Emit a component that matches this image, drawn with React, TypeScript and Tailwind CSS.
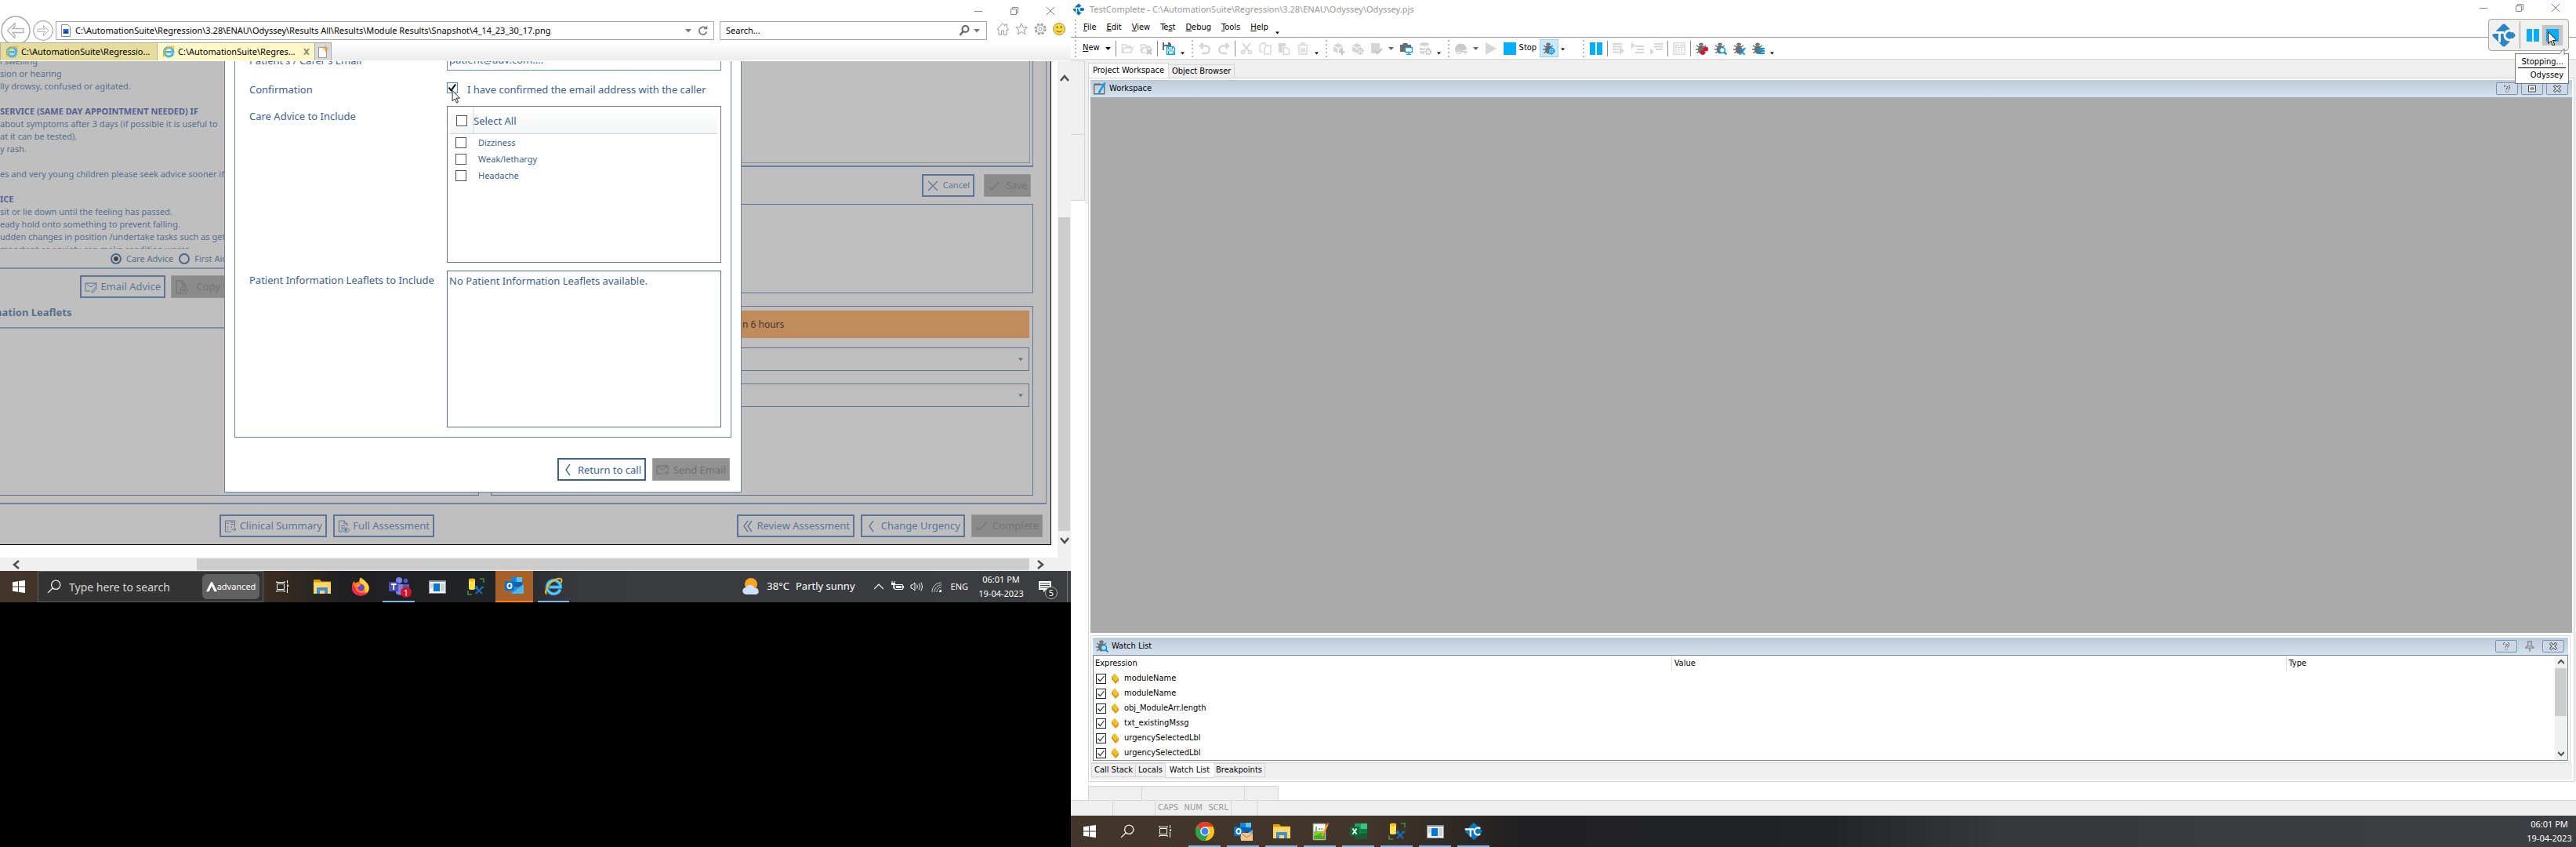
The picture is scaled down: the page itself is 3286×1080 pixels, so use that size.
import type { ReactNode } from "react";

const NOTO = "font-['Noto_Sans',sans-serif]";
const TAHOMA = "font-['DejaVu_Sans_Condensed','DejaVu_Sans',sans-serif]";

type SvgProps = { children: ReactNode; className?: string; box?: string };
const Svg = ({ children, className = "size-4", box = "0 0 16 16" }: SvgProps) => (
  <svg viewBox={box} className={`${className} shrink-0`} fill="none" aria-hidden="true">
    {children}
  </svg>
);

/* ---------- shared icons ---------- */

const IELogo = ({ className = "size-4" }: { className?: string }) => (
  <Svg className={className} box="0 0 24 24">
    <path d="M20.5 15.5A8.6 8.6 0 1 1 21 12.6H6.5" stroke="#2b9fe0" strokeWidth="4.2" />
    <path d="M20.5 15.5A8.6 8.6 0 1 1 21 12.6H6.5" stroke="#74d0f7" strokeWidth="1.6" />
    <path d="M3.5 21.5C0 20.5 3 12 9 6.500S22 .5 22.500 3.500c.2 1.200-.3 2.500-1 4" stroke="#f2b61b" strokeWidth="2" />
  </Svg>
);

const MinIcon = () => <Svg className="size-3" box="0 0 12 12"><path d="M1 6.500h10" stroke="#8a8a8a" /></Svg>;
const RestoreIcon = () => (
  <Svg className="size-3" box="0 0 12 12">
    <path d="M1.500 3.500h7v7h-7zM3.500 3.500v-2h7v7h-2" stroke="#8a8a8a" />
  </Svg>
);
const CloseIcon = () => <Svg className="size-3" box="0 0 12 12"><path d="M1 1l10 10M11 1L1 11" stroke="#8a8a8a" /></Svg>;

const WindowControls = ({ className }: { className: string }) => (
  <div className={className}>
    <button aria-label="Minimize"><MinIcon /></button>
    <button aria-label="Restore"><RestoreIcon /></button>
    <button aria-label="Close"><CloseIcon /></button>
  </div>
);

const TCLogo = ({ className, color = "#0a76bd" }: { className: string; color?: string }) => (
  <Svg className={className} box="0 0 32 32">
    <rect x="5" y="5" width="22" height="22" rx="3" transform="rotate(45 16 16)" fill={color} />
    <path d="M1 12.500h15M10.500 13v12" stroke="#fff" strokeWidth="3" />
    <path d="M27 11.500a6 6 0 1 0 0 9" stroke="#fff" strokeWidth="3" />
  </Svg>
);

const CursorIcon = ({ className }: { className: string }) => (
  <svg viewBox="0 0 12 19" className={className} aria-hidden="true">
    <path d="M.5.5v15l3.500-3.300 2.500 5.800 2.300-1-2.500-5.600H11z" fill="#fff" stroke="#111" />
  </svg>
);

/* ---------- taskbar icons ---------- */

const StartIcon = () => (
  <Svg><path d="M0 2.200 7 1.200V7.600H0zM8 1.100 16 0v7.600H8zM0 8.400h7v6.400l-7-1zM8 8.400h8V16l-8-1.100z" fill="#fff" /></Svg>
);
const MagnifierIcon = ({ className = "size-[18px]" }: { className?: string }) => (
  <Svg className={className}><circle cx="10" cy="6" r="5" stroke="#eee" strokeWidth="1.200" /><path d="M6.500 9.500 1 15" stroke="#eee" strokeWidth="1.200" /></Svg>
);
const TaskViewIcon = () => (
  <Svg>
    <path d="M1.500 4.500h9v7h-9zM.5 2.500h11M.5 13.500h11M1 1v1.500M11 1v1.500M1 13.500V15M11 13.500V15M14.500 0v4M14.500 9v7" stroke="#fff" />
    <path d="M14 5.500h2v2.500h-2z" fill="#fff" />
  </Svg>
);
const FolderIcon = () => (
  <Svg className="h-5 w-[22px]" box="0 0 22 20">
    <path d="M0 1h8l2 2.500h12V19H0z" fill="#e0a100" />
    <path d="M0 4.500h22V19H0z" fill="#ffd766" />
    <path d="M4 11h14v8h-4v-4H8v4H4z" fill="#3f8fd6" />
  </Svg>
);
const FirefoxIcon = () => (
  <Svg className="size-6" box="0 0 24 24">
    <path d="M12 .5c2 2 3 3.500 3.500 5C20 7 23 10 23 14c0 5-4.500 9.500-11 9.500S1 19 1 13.500C1 9 2.500 7.500 3 5l2.500 2.500C7 6.500 8 6 9.500 6 10 4 11 2 12 .5z" fill="#ff7a18" />
    <path d="M12 .5c5 3.500 10.500 7 10.500 13.500 0 4-3 7-6 8C19 15 17 9 11.500 8 10.500 5 11 2 12 .5z" fill="#ffcf33" />
    <path d="M1 13.500C1 19 5.500 23.500 12 23.500c4 0 7-2 8.500-4.500-7 3-14 1-15.500-6-1-1-2-3-2-5-1.200 1.500-2 3.500-2 5.500z" fill="#f0245c" />
    <circle cx="12.500" cy="13" r="4.300" fill="#6f40d8" />
    <path d="M6 9.500c2.500-1.500 5-.5 6.500 1-2 0-3 1.500-4.500 2.500z" fill="#ff9a1f" />
  </Svg>
);
const TeamsIcon = () => (
  <Svg className="size-7" box="0 0 28 28">
    <circle cx="14" cy="6" r="4" fill="#7b83eb" />
    <circle cx="22.500" cy="6.500" r="2.800" fill="#5059c9" />
    <path d="M10 11h11v8a6 6 0 0 1-11 3z" fill="#7b83eb" />
    <path d="M19 11h8v6a4 4 0 0 1-8 3z" fill="#5059c9" />
    <rect x="1" y="8" width="12" height="12" fill="#464eb8" />
    <path d="M4 11h6.500M7.200 11v7" stroke="#fff" strokeWidth="1.800" />
  </Svg>
);
const AppWindowIcon = () => (
  <Svg className="h-[17px] w-[22px]" box="0 0 22 17">
    <path d="M0 0h22v17H0z" fill="#8d9499" /><path d="M1 2h20v14H1z" fill="#f2f2f2" />
    <path d="M6 4h8v10H6z" fill="#0078d7" />
    <path d="M2 5h3M2 7h3M2 9h3M15 5h5M15 7h5M15 9h5M15 11h5M15 13h5" stroke="#9aa0a5" strokeWidth=".8" />
  </Svg>
);
const ToolIcon = () => (
  <Svg className="h-[22px] w-[22px]" box="0 0 22 22">
    <path d="M2 2.500v11c0 2 8 2 8 0v-11z" fill="#fce14b" /><ellipse cx="6" cy="2.500" rx="4.200" ry="2" fill="#f3c22b" />
    <path d="M16 1h5v5M1 16v5h5" stroke="#36923a" strokeWidth="1.600" />
    <path d="M11 12l8 8M19 12l-8 8" stroke="#0d76c4" strokeWidth="1.800" />
    <path d="M10 11.500l2.500-1 1 2-2 1.500zM18 10.500l2 2 1.500-1" stroke="#0d76c4" strokeWidth="1.200" fill="#0d76c4" />
  </Svg>
);
const OutlookIcon = ({ letter = false }: { letter?: boolean }) => (
  <Svg className="size-6" box="0 0 24 24">
    <path d="M8 1h14v12H8z" fill="#0a62ad" /><path d="M15 1h7v6h-7z" fill="#50c8f5" /><path d="M8 1h7v6H8z" fill="#1683d6" />
    <path d="M8 10l8 5 8-5v12H8z" fill="#1a94e6" /><path d="M8 22l16-12v12z" fill="#4db8f0" />
    <rect y="6" width="12" height="12" fill="#0d72c7" /><ellipse cx="6" cy="12" rx="2.600" ry="3.200" stroke="#fff" strokeWidth="1.800" />
    {letter && <><path d="M9 14h15v10H9z" fill="#f6c58e" /><path d="M9 14l7.500 6 7.500-6" stroke="#a8753c" /></>}
  </Svg>
);
const ChromeIcon = () => (
  <Svg className="size-6" box="0 0 24 24">
    <circle cx="12" cy="12" r="12" fill="#fbc116" />
    <path d="M12 12 1.600 6A12 12 0 0 1 22.400 6H12z" fill="#e33b2e" />
    <path d="M12 12 1.600 6A12 12 0 0 0 12 24l5.200-9z" fill="#2da24c" />
    <circle cx="12" cy="12" r="5.800" fill="#fff" /><circle cx="12" cy="12" r="4.500" fill="#3f82f0" />
  </Svg>
);
const NotepadIcon = () => (
  <Svg className="size-6" box="0 0 24 24">
    <path d="M3 2h16v21H3z" fill="#f5f8ee" stroke="#777" /><path d="M4 12h14v10H4z" fill="#7fd02f" /><path d="M4 18l14-5v9H4z" fill="#4fae1c" />
    <path d="M4 1.500h14" stroke="#555" strokeDasharray="1.500 1" strokeWidth="1.500" /><path d="M7 6v6M10 9h2M13 9h2" stroke="#444" />
    <path d="M22 2l-6 13-1.500 3" stroke="#f0a32c" strokeWidth="2.400" /><path d="M22.500 1l-1 2.500" stroke="#d8402c" strokeWidth="2.600" />
  </Svg>
);
const ExcelIcon = () => (
  <Svg className="size-6" box="0 0 24 24">
    <path d="M7 2h16v20H7z" fill="#1c8048" /><path d="M15 2h8v7h-8z" fill="#35c481" /><path d="M7 2h8v7H7z" fill="#21a366" /><path d="M15 9h8v6h-8z" fill="#107c41" /><path d="M7 15h16v7H7z" fill="#185c37" />
    <rect x="1" y="6" width="12" height="12" fill="#0e6b38" /><path d="M4.500 8.500l5 7M9.500 8.500l-5 7" stroke="#fff" strokeWidth="1.800" />
  </Svg>
);
const WeatherIcon = () => (
  <Svg className="size-6" box="0 0 24 24">
    <circle cx="12" cy="9" r="8" fill="#fba41f" />
    <path d="M6 22a4.500 4.500 0 0 1-.5-9A6 6 0 0 1 16.500 14 4.200 4.200 0 0 1 19 22z" fill="#cfe0fb" />
  </Svg>
);

/* ---------- browser window ---------- */

const ADDRESS =
  "C:\\AutomationSuite\\Regression\\3.28\\ENAU\\Odyssey\\Results All\\Results\\Module Results\\Snapshot\\4_14_23_30_17.png";

const BrowserChrome = () => (
  <header className="bg-white">
    <WindowControls className="flex h-[27px] items-center justify-end gap-[34px] pr-5" />
    <div className="flex h-[27px] items-start pr-[7px] pl-px">
      <button aria-label="Back" className="-mt-[7px]">
        <Svg className="size-[38px]" box="0 0 38 38">
          <circle cx="19" cy="19" r="18" stroke="#a9a9a9" strokeWidth="1.500" />
          <path d="M18 9.500 8.500 19 18 28.500v-4L15 21.500h14v-5H15l3-3z" stroke="#b2b2b2" strokeWidth="1.300" />
        </Svg>
      </button>
      <button aria-label="Forward" className="-mt-px ml-[3px]">
        <Svg className="size-[26px]" box="0 0 26 26">
          <circle cx="13" cy="13" r="12.300" stroke="#a9a9a9" strokeWidth="1.200" />
          <path d="M13.500 6.500 20 13l-6.500 6.500v-3l2-2H6v-3.500h9.500l-2-2z" stroke="#b2b2b2" />
        </Svg>
      </button>
      <div className="ml-[3px] flex h-6 w-[840px] items-center border border-[#a9a9a9] pr-1.5 pl-1">
        <Svg className="h-4 w-4">
          <path d="M2.500.5h8l3 3v12h-11z" fill="#fff" stroke="#8c8c8c" /><path d="M4.500 6h7v6h-7z" fill="#1e6fd0" /><path d="M5 11l3-3 3 3z" fill="#123a7a" />
        </Svg>
        <input aria-label="Address" defaultValue={ADDRESS} className="ml-1 min-w-0 flex-1 bg-transparent text-[11px] text-black outline-none" />
        <Svg className="size-2" box="0 0 8 8"><path d="M0 2h8L4 6.500z" fill="#777" /></Svg>
        <button aria-label="Refresh" className="ml-2">
          <Svg className="size-3.5"><path d="M13 9.500A5.500 5.500 0 1 1 11 4" stroke="#777" strokeWidth="2" /><path d="M8.500 6H14V.5z" fill="#777" /></Svg>
        </button>
      </div>
      <div className="ml-[7px] flex h-6 flex-1 items-center border border-[#a9a9a9] pr-2 pl-[7px]">
        <input aria-label="Search" placeholder="Search..." className="min-w-0 flex-1 text-[11px] outline-none placeholder:text-black" />
        <Svg><circle cx="9.500" cy="6" r="4" stroke="#666" strokeWidth="2" /><path d="M6.500 9 2.500 14" stroke="#666" strokeWidth="2.500" /></Svg>
        <Svg className="ml-1 size-2" box="0 0 8 8"><path d="M0 2h8L4 6.500z" fill="#777" /></Svg>
      </div>
      <div className="ml-3 flex gap-2 pt-0.5">
        <button aria-label="Home"><Svg><path d="M1 8.500 8 1l3 3V2h2.500v4.500L15.500 9H13v6.500H9.500V10h-3v5.500H3V9z" stroke="#9b9b9b" /></Svg></button>
        <button aria-label="Favorites"><Svg><path d="M8 .8l2.100 5h5.200l-4.100 3.400 1.500 5.600L8 11.500l-4.700 3.300 1.500-5.600L.7 5.800h5.200z" stroke="#9b9b9b" /></Svg></button>
        <button aria-label="Tools"><Svg><circle cx="8" cy="8" r="6.500" stroke="#9b9b9b" strokeWidth="2" strokeDasharray="3 2.100" /><circle cx="8" cy="8" r="5" fill="#fff" stroke="#9b9b9b" /><circle cx="8" cy="8" r="2" stroke="#9b9b9b" /></Svg></button>
        <button aria-label="Feedback"><Svg><circle cx="8" cy="8" r="7.500" fill="#fbd83b" stroke="#a89a5a" /><path d="M5.500 4.500v2.500M10.500 4.500v2.500" stroke="#6b5a10" strokeWidth="1.500" /><path d="M4.500 10c1.500 2.500 5.500 2.500 7 0" stroke="#6b5a10" /></Svg></button>
      </div>
    </div>
    <nav className="relative mb-px flex h-[23px] bg-linear-to-b from-white to-[#ececec] text-[11px] text-black">
      <button className="flex w-[200px] items-center gap-1 overflow-hidden border-t border-l border-[#b0b0b0] bg-[#e5dc9c] pl-1.5 whitespace-nowrap">
        <IELogo /><span>C:\AutomationSuite\Regressio...</span>
      </button>
      <div className="flex w-[201px] items-center gap-1 border-t border-l border-[#b0b0b0] bg-[#fff8c6] pr-1.5 pl-1.5 whitespace-nowrap">
        <IELogo /><span className="flex-1">C:\AutomationSuite\Regres...</span>
        <button aria-label="Close tab"><Svg className="size-2" box="0 0 8 8"><path d="M1 0l6 8M7 0 1 8" stroke="#8d8a70" strokeWidth="2" /></Svg></button>
      </div>
      <button aria-label="New tab" className="flex w-[22px] items-center justify-center border border-b-0 border-[#a9a9a9] bg-[#d9d9d9]">
        <Svg><path d="M2.500 2.500h10v13h-10z" fill="#fff" stroke="#999" /><path d="M11.500 0v8M7.500 4h8M9 1.500l5 5M14 1.500l-5 5" stroke="#f0a030" /></Svg>
      </button>
    </nav>
  </header>
);

const OutlineButton = ({ icon, children, className = "" }: { icon: ReactNode; children: ReactNode; className?: string }) => (
  <button className={`flex h-[29px] items-center justify-between border-2 border-[#5b7599] pr-1 pl-1 text-[13px] whitespace-nowrap text-[#5b7599] ${className}`}>
    {icon}<span>{children}</span>
  </button>
);
const GreyButton = ({ icon, children, className = "" }: { icon: ReactNode; children: ReactNode; className?: string }) => (
  <button disabled className={`flex h-[29px] items-center justify-between border border-[#969696] bg-[#8b8b8b] px-1 text-[13px] whitespace-nowrap text-[#747474] ${className}`}>
    {icon}<span>{children}</span>
  </button>
);

const CheckMark = ({ className = "size-4" }) => <Svg className={className}><path d="M1 9l4 4L15 2.500" stroke="currentColor" strokeWidth="1.200" /></Svg>;
const ChevronLeft = () => <Svg><path d="M10 1 5 8l5 7" stroke="currentColor" strokeWidth="1.300" /></Svg>;

const ADVICE: { text: string; bold?: boolean }[] = [
  { text: "l swelling" },
  { text: "sion or hearing" },
  { text: "lly drowsy, confused or agitated." },
  { text: "" },
  { text: "SERVICE (SAME DAY APPOINTMENT NEEDED) IF", bold: true },
  { text: "about symptoms after 3 days (if possible it is useful to" },
  { text: "at it can be tested)." },
  { text: "y rash." },
  { text: "" },
  { text: "es and very young children please seek advice sooner if" },
  { text: "" },
  { text: "ICE", bold: true },
  { text: "sit or lie down until the feeling has passed." },
  { text: "eady hold onto something to prevent falling." },
  { text: "udden changes in position /undertake tasks such as get" },
  { text: "mportant as anxiety can make condition worse." },
];

const AdviceColumn = () => (
  <section className="mb-[9px] flex w-[611px] flex-col border-r border-b border-[#5f7594] text-[#56708f]">
    <div className="h-[239px] w-[286px] overflow-hidden text-[11px] leading-4 whitespace-nowrap">
      <div className="-mt-2">
        {ADVICE.map((line, i) => (
          <p key={i} className={line.bold ? "h-4 font-bold text-[#54618f]" : "h-4"}>{line.text}</p>
        ))}
      </div>
    </div>
    <div className="flex h-[26px] items-center border-b-2 border-[#7e8fa8] pt-0.5 pl-[141px] text-[11px] whitespace-nowrap">
      <label className="flex items-center gap-1.5"><input type="radio" name="advice" defaultChecked className="size-3.5 appearance-none rounded-full border-2 border-[#4b6688] bg-[#444] bg-clip-content p-[2px]" />Care Advice</label>
      <label className="ml-[7px] flex items-center gap-1.5"><input type="radio" name="advice" className="size-3.5 appearance-none rounded-full border-2 border-[#4b6688]" />First Aid</label>
    </div>
    <div className="mt-2 flex gap-[7px] pl-[102px]">
      <OutlineButton className="w-[109px]" icon={<Svg><path d="M15 8V3H1v10h6M1 3l7 5 7-5M9 14l5-6 1.500 1.500-5 5.500H9z" stroke="currentColor" /></Svg>}>Email Advice</OutlineButton>
      <GreyButton className="w-[130px]" icon={<Svg className="size-[18px]"><path d="M7 15H2V1h6l4 4v2M8 1v4h4" stroke="currentColor" /><circle cx="10.500" cy="11.500" r="4" stroke="currentColor" /><path d="M8.500 11.500h4M10.500 9.500v4" stroke="currentColor" /></Svg>}>Copy to Record</GreyButton>
    </div>
    <h2 className="flex h-[39px] items-center border-b-2 border-[#7e8fa8] text-[13px] font-bold"><span className="-ml-1.5">nation Leaflets</span></h2>
  </section>
);

const Combo = ({ label, className }: { label: string; className: string }) => (
  <div className={`relative ${className}`}>
    <select aria-label={label} className="block h-[30px] w-full appearance-none border border-[#5f7594]" />
    <Svg className="pointer-events-none absolute top-3 right-2 size-1.5" box="0 0 6 6"><path d="M0 .5l3 5 3-5-3 1.500z" fill="#4f6a8c" /></Svg>
  </div>
);

const CallColumn = () => (
  <section className="mr-4 mb-[9px] flex flex-1 flex-col text-[13px]">
    <div className="h-[135px] border-r border-b-2 border-[#6b809c] pr-[3px] pb-[3px]"><div className="h-full border-r border-b border-[#8b8f95]" /></div>
    <div className="mt-[9px] flex h-[29px] justify-end gap-3 pr-[3px]">
      <button className="flex w-[67px] items-center justify-between border-2 border-[#5b7599] px-1 text-[11px] text-[#5b7599]">
        <Svg><path d="M2 2l12 12M14 2 2 14" stroke="currentColor" strokeWidth="1.300" /></Svg>Cancel
      </button>
      <button disabled className="flex w-[60px] items-center justify-between border border-[#969696] bg-[#8b8b8b] px-1 text-[12px] text-[#747474]"><CheckMark />Save</button>
    </div>
    <div className="mt-[9px] h-[114px] border border-[#5f7594]" />
    <div className="mt-4 flex-1 border border-[#5f7594] pt-[5px] pr-1">
      <p className="flex h-[35px] items-center bg-[#c08c5b] pl-[320px] text-[12px] text-[#453a2e]">n 6 hours</p>
      <Combo label="Urgency reason" className="mt-3" />
      <Combo label="Outcome" className="mt-4" />
    </div>
  </section>
);

const BOX = "size-3.5 appearance-none border border-[#555] bg-white";

const EmailDialog = () => (
  <div role="dialog" aria-label="Email advice" className="absolute top-0 right-[394px] left-[286px] border border-t-0 border-[#6a86ab] bg-white px-3 pb-[14px] text-[13px] leading-5 text-[#3a6293]">
    <div className="border border-t-0 border-[#6a86ab] pr-3 pb-3 pl-[18px]">
      <div className="grid h-3 grid-cols-[252px_1fr] overflow-hidden">
        <label htmlFor="mail" className="-mt-[11px]">Patient's / Carer's Email</label>
        <input id="mail" defaultValue="patient@adv.com...." className="-mt-4 h-7 w-full border border-[#5b8fd0] px-0.5 outline-none" />
      </div>
      <div className="mt-[14px] grid h-5 grid-cols-[252px_1fr]">
        <span>Confirmation</span>
        <label className="relative flex items-center gap-3 whitespace-nowrap">
          <input type="checkbox" defaultChecked className="-mt-1 size-3.5 appearance-none border border-[#3b8ae6] bg-white" />
          <span className="pointer-events-none absolute top-0.5 left-px text-black"><Svg className="size-3"><path d="M2 7.500l4 5L13.500 2" stroke="currentColor" strokeWidth="2.600" /></Svg></span>
          <CursorIcon className="absolute top-[11px] left-[6px] h-[17px] w-3" />
          I have confirmed the email address with the caller
        </label>
      </div>
      <div className="mt-[11px] grid grid-cols-[252px_1fr]">
        <span className="pt-[3px]">Care Advice to Include</span>
        <div className="h-[200px] border border-[#6f7380] pt-px pr-1 pl-[3px]">
          <div className="flex h-[34px] items-center border-b border-[#d5d5d5] bg-linear-to-b from-white to-[#f4f5f6]">
            <label className="flex h-full items-center"><span className="flex h-full w-[30px] items-center border-r border-[#dedede] pl-2"><input type="checkbox" className={BOX} /></span>Select All</label>
          </div>
          <ul className="pl-[7px] text-[11px]">
            {["Dizziness", "Weak/lethargy", "Headache"].map((name) => (
              <li key={name} className="h-[21px]">
                <label className="flex h-full items-center gap-[15px]"><input type="checkbox" className={BOX} />{name}</label>
              </li>
            ))}
          </ul>
        </div>
      </div>
      <div className="mt-2.5 grid grid-cols-[252px_1fr]">
        <span className="pt-0.5 whitespace-nowrap">Patient Information Leaflets to Include</span>
        <div className="h-[200px] border border-[#4f74a5] px-0.5 pt-0.5">No Patient Information Leaflets available.</div>
      </div>
    </div>
    <div className="mt-[26px] flex justify-end gap-2 pr-0.5">
      <button className="flex h-[29px] w-[113px] items-center justify-between border-2 border-[#3a6293] pr-1 pl-1 whitespace-nowrap"><ChevronLeft />Return to call</button>
      <button disabled className="flex h-[29px] w-[99px] items-center justify-between border border-[#a5a5a5] bg-[#929292] px-1 whitespace-nowrap text-[#707070]">
        <Svg><path d="M15 9V3H1v10h8M1 3l7 5 7-5M10 12h5M13 10l2.500 2L13 14.500" stroke="currentColor" /></Svg>Send Email
      </button>
    </div>
  </div>
);

const PageView = () => (
  <div className="relative flex flex-1 flex-col overflow-hidden border-r border-b border-black bg-[#bfbfbf]">
    <div className="mr-[5px] flex h-[565px] gap-[15px] border-r border-b-2 border-[#6f84a2]">
      <AdviceColumn />
      <CallColumn />
    </div>
    <div className="flex h-[51px] gap-2 pt-[13px] pr-2.5 pl-[280px]">
      <OutlineButton className="w-[137px]" icon={<Svg><path d="M9 15H1.500V1h12v8M3.500 5l1-2 1 2M8 3h4M8 5.500h4M3.500 9h2M8 9h2M3.500 12h2M9 12h6M12.500 9.500 15 12l-2.500 2.500" stroke="currentColor" /></Svg>}>Clinical Summary</OutlineButton>
      <OutlineButton className="w-[129px]" icon={<Svg><path d="M5 15H1.500V1H8l4 4v3M8 1v4h4M4 7.500h5M4 10h3" stroke="currentColor" /><path d="M5 13c2.500-4 7.500-4 10 0-2.500 3.500-7.500 3.500-10 0z" stroke="currentColor" /><circle cx="10" cy="12.800" r="1.800" fill="currentColor" /></Svg>}>Full Assessment</OutlineButton>
      <OutlineButton className="ml-auto w-[150px]" icon={<Svg><path d="M8 1 3 8l5 7M13 1 8 8l5 7" stroke="currentColor" strokeWidth="1.300" /></Svg>}>Review Assessment</OutlineButton>
      <OutlineButton className="w-[133px]" icon={<ChevronLeft />}>Change Urgency</OutlineButton>
      <GreyButton className="w-[91px]" icon={<CheckMark />}>Complete</GreyButton>
    </div>
    <EmailDialog />
  </div>
);

const Arrow = ({ d }: { d: string }) => <Svg className="size-3" box="0 0 12 12"><path d={d} stroke="#505050" strokeWidth="2.600" /></Svg>;

const TaskButton = ({ label, children, open = false, className = "w-12" }: { label: string; children: ReactNode; open?: boolean; className?: string }) => (
  <button aria-label={label} className={`relative flex items-center justify-center ${className}`}>
    {children}
    {open && <span className="absolute inset-x-1 bottom-0 h-0.5 bg-[#76b9ed]" />}
  </button>
);

const LeftTaskbar = () => (
  <footer className="flex h-10 bg-[linear-gradient(90deg,#42352a_0%,#3a2d22_25%,#202022_32%,#222326_46%,#383a3e_54%,#3b3d41_100%)] text-white">
    <TaskButton label="Start"><StartIcon /></TaskButton>
    <div className="flex w-[288px] items-center border border-[#606060] bg-[#333] pr-1 pl-[11px]">
      <MagnifierIcon />
      <input aria-label="Windows search" placeholder="Type here to search" className="ml-2.5 min-w-0 flex-1 text-[14px] outline-none placeholder:text-[#d6d6d6]" />
      <span className="flex h-8 w-[73px] items-center justify-center rounded-md bg-[#606060] text-[11px]">
        <Svg className="size-3.5"><path d="M0 15 7 1h2l7 14h-4L8 7l-4 8z" fill="#fff" /></Svg>advanced
      </span>
    </div>
    <TaskButton label="Task view"><TaskViewIcon /></TaskButton>
    <TaskButton label="File Explorer" className="ml-0.5 w-[49px]"><FolderIcon /></TaskButton>
    <TaskButton label="Firefox" className="w-[49px]"><FirefoxIcon /></TaskButton>
    <TaskButton label="Teams" open className="w-[49px]">
      <TeamsIcon />
      <span className="absolute right-2 bottom-1.5 flex size-3.5 items-center justify-center rounded-full bg-[#d0142c] text-[11px] leading-none">1</span>
    </TaskButton>
    <TaskButton label="Application" className="w-[49px]"><AppWindowIcon /></TaskButton>
    <TaskButton label="Database tools" className="w-[50px]"><ToolIcon /></TaskButton>
    <button aria-label="Outlook" className="flex w-12 items-center justify-center border-b-2 border-[#ff7a10] bg-[#a86029]"><OutlookIcon /></button>
    <TaskButton label="Internet Explorer" open className="ml-0.5 w-12"><IELogo className="size-6" /></TaskButton>
    <div className="ml-auto flex items-center whitespace-nowrap">
      <WeatherIcon />
      <span className="ml-2 text-[13px]">38°C</span>
      <span className="ml-2 text-[13px]">Partly sunny</span>
      <Svg className="ml-6 size-3" box="0 0 12 12"><path d="M0 9l6-6 6 6" stroke="#fff" strokeWidth="1.200" /></Svg>
      <Svg className="ml-2.5 size-4"><path d="M4.500 5.500h10v6h-10z" stroke="#fff" /><path d="M6 7h7v3H6zM15 7h1v3h-1zM0 3h5v3H0z" fill="#fff" /><path d="M1 1v2M4 1v2M2.500 6v4h2" stroke="#fff" /></Svg>
      <Svg className="ml-2 size-4"><path d="M1 6v4h2l3 3V3L3 6zM8.500 5.500c1 1.500 1 3.500 0 5M11 4c2 2.500 2 5.500 0 8M13.500 2.500c2.500 3.500 2.500 7.500 0 11" stroke="#fff" /></Svg>
      <Svg className="ml-2.5 size-4"><path d="M2 15C2 8 7 3 14 3M5 15c0-5 4-9 9-9M8 15c0-3.500 2.500-6 6-6" stroke="#ccc" /><path d="M11 15c0-2 1-3 3-3v3z" fill="#fff" /></Svg>
      <span className="ml-2.5 text-[11px]">ENG</span>
      <time className="ml-2.5 w-16 text-center text-[11px] leading-[18px]">06:01 PM<br />19-04-2023</time>
      <span className="relative ml-4 flex h-8 w-7 items-center">
        <Svg className="size-4"><path d="M0 1h16v11H9l-3 3.500V12H0z" fill="#fff" /><path d="M2 4h12M2 6.500h12M2 9h12" stroke="#3b3d41" /></Svg>
        <span className="absolute right-1 bottom-0 flex size-4 items-center justify-center rounded-full border border-[#aaa] bg-[#333] text-[11px]">5</span>
      </span>
      <span className="ml-2 h-10 w-[5px] border-l border-[#777]" />
    </div>
  </footer>
);

const BrowserWindow = () => (
  <section className={`${NOTO} flex min-w-0 flex-col`}>
    <BrowserChrome />
    <div className="flex bg-white">
      <div className="flex flex-1 flex-col pb-4"><PageView /></div>
      <div className="ml-2 flex w-[17px] flex-col items-center bg-[#f0f0f0] pt-4 pb-4">
        <Arrow d="M1 9l5-6 5 6" />
        <div className="mt-[171px] w-[15px] flex-1 bg-[#cdcdcd]" />
        <div className="mt-1.5"><Arrow d="M1 3l5 6 5-6" /></div>
      </div>
    </div>
    <div className="flex h-[17px] items-center bg-[#f0f0f0] pr-[33px] pl-[15px]">
      <Arrow d="M9 1 3 6l6 5" />
      <div className="mr-2 ml-56 h-[15px] flex-1 bg-[#cdcdcd]" />
      <Arrow d="M3 1l6 5-6 5" />
    </div>
    <LeftTaskbar />
  </section>
);

/* ---------- test tool window ---------- */

const G = "#d6d6d6";
const Grip = () => <span className="mr-[-1px] ml-px h-[22px] w-[2px] shrink-0 bg-[repeating-linear-gradient(180deg,#b9b9b9_0_2px,#fff_2px_5px)]" />;
const Sep = () => <span className="-mx-0.5 h-5 w-px shrink-0 bg-[#8a8a8a]" />;
const LowCaret = () => <Svg className="-mb-3 -ml-px h-1 w-[5px]" box="0 0 5 4"><path d="M0 .5h5L2.500 3.500z" fill="#000" /></Svg>;
const Caret = ({ color = "#666" }) => <Svg className="-ml-px h-1 w-[7px]" box="0 0 7 4"><path d="M0 0h7L3.500 4z" fill={color} /></Svg>;
const Tool = ({ label, children }: { label: string; children: ReactNode }) => <button aria-label={label}><Svg>{children}</Svg></button>;

const BugShape = () => (
  <>
    <ellipse cx="7" cy="9" rx="4" ry="5.500" fill="#6d6d6d" /><path d="M4 3.500a3 3 0 0 1 6 0z" fill="#6d6d6d" />
    <path d="M1 4l3 2M13 4l-3 2M0 9h14M1.500 14 4 11.500M12.500 14 10 11.500" stroke="#6d6d6d" strokeWidth="1.400" />
  </>
);

const Toolbar = () => (
  <div className="flex h-7 items-center gap-2 border-b border-[#d6d6d6] bg-white pl-1 text-black">
    <Grip />
    <button className="ml-px flex items-center gap-2"><span><u>N</u>ew</span><Caret color="#000" /></button>
    <Sep />
    <Tool label="Open"><path d="M1.500 13V3h5l1 2h5v2M1.500 13h11L15 7H4z" stroke={G} strokeWidth="1.500" /></Tool>
    <Tool label="Close project"><path d="M1.500 13V3h5l1 2h5v2M1.500 13h7M1.500 13 4 7h11" stroke={G} strokeWidth="1.500" /><path d="M9 9l6 6M15 9l-6 6" stroke="#c4c4c4" strokeWidth="2.500" /></Tool>
    <Sep />
    <Tool label="Save all"><path d="M0 0h9l2 2v8H0z" fill="#6a6a6a" /><path d="M2 0h5v3H2zM2 5h6v5H2z" fill="#fff" /><path d="M5.500 5.500h8l2 2v8h-10z" fill="#fff" stroke="#0aa3ea" strokeWidth="1.400" /><path d="M7.500 5.500h5v3h-5zM7.500 11h6v4h-6z" stroke="#0aa3ea" /></Tool>
    <LowCaret /><Grip />
    <Tool label="Undo"><path d="M2 4.500h7a4.500 4.500 0 0 1 0 9.500H4M5.500 1 2 4.500 5.500 8" stroke={G} strokeWidth="2.600" /></Tool>
    <Tool label="Redo"><path d="M14 4.500H7A4.500 4.500 0 0 0 7 14h5M10.500 1 14 4.500 10.500 8" stroke={G} strokeWidth="2.600" /></Tool>
    <Sep />
    <Tool label="Cut"><path d="M3 1l8 10M13 1 5 11" stroke={G} strokeWidth="2" /><circle cx="3.500" cy="12.500" r="2" stroke={G} strokeWidth="1.500" /><circle cx="12.500" cy="12.500" r="2" stroke={G} strokeWidth="1.500" /></Tool>
    <Tool label="Copy"><path d="M1 12V4l3-3h4v3M1 12h4M7 15V7l3-3h5v11z" stroke={G} strokeWidth="1.500" /></Tool>
    <Tool label="Paste"><path d="M1 1h9v4H6v8H1z" fill={G} /><path d="M7.500 6.500h4l3 3v6h-7z" fill="#fff" stroke={G} strokeWidth="1.500" /></Tool>
    <Tool label="Delete"><path d="M1 3.500h14M6 3V1h4v2M3 5v10h10V5M6 7v6M8 7v6M10 7v6" stroke={G} strokeWidth="1.400" /></Tool>
    <LowCaret /><Grip />
    <Tool label="Add object"><path d="M1 4l6-3 6 3-6 3zM1 5.500 6.500 8v6L1 11zM8 8l5-2.500V9L8 13z" fill={G} /><path d="M12 9v7M8.500 12.500h7" stroke="#c6c6c6" strokeWidth="2" /></Tool>
    <Tool label="Map object"><path d="M1 4l6-3 6 3-6 3zM1 5.500 6.500 8v6L1 11z" fill={G} /><circle cx="11" cy="11" r="3.500" stroke="#c6c6c6" strokeWidth="1.300" /><path d="M11 6v10M6 11h10" stroke="#c6c6c6" /></Tool>
    <Tool label="Checkpoint"><path d="M1 1h11v9l-3 4H1z" fill={G} /><path d="M5 10l4 4 6-6" stroke="#c6c6c6" strokeWidth="2.400" /></Tool>
    <Caret />
    <Tool label="Capture"><path d="M0 3h3l1-2h5l1 2h4v4H6v5H0z" fill="#6a6a6a" /><path d="M6.500 6.500h9v6h-9zM11 12.500v2.500M8 15.500h6" stroke="#0aa3ea" strokeWidth="1.300" /></Tool>
    <Tool label="Database"><ellipse cx="7" cy="2.500" rx="6" ry="2.500" fill={G} /><path d="M1 6c3 2 9 2 12 0v2H8v2H1zM1 11h6v4c-3 0-6-1-6-2z" fill={G} /><circle cx="12" cy="12" r="3" stroke="#c6c6c6" strokeWidth="2.500" strokeDasharray="2 .8" /></Tool>
    <LowCaret /><Grip />
    <Tool label="Record"><path d="M0 9a7.500 7.500 0 0 1 15 0l-9 3H1z" fill="#c9c9c9" /><circle cx="5" cy="12" r="2.500" stroke={G} strokeWidth="1.500" /><path d="M8 12h8M13 12v3" stroke={G} strokeWidth="2" /></Tool>
    <Caret />
    <Tool label="Run"><path d="M1 0v16l14-8z" fill={G} /></Tool>
    <button className="flex items-center gap-1"><Svg><path d="M0 0h16v16H0z" fill="#06aefc" /></Svg>Stop</button>
    <button aria-label="Enable debugging" className="-ml-1 flex h-[23px] w-6 items-center justify-center border border-[#99d1ff] bg-[#cce8ff]">
      <Svg><BugShape /><circle cx="11" cy="11" r="3.500" stroke="#0a94dc" strokeWidth="1.400" fill="#cce8ff" /><path d="M11 6v10M6 11h10" stroke="#0a94dc" /></Svg>
    </button>
    <span className="-ml-1 flex pb-px"><LowCaret /></span>
    <span className="w-1.5" />
    <Grip />
    <Tool label="Pause"><path d="M0 0h7v16H0zM9 0h7v16H9z" fill="#06aefc" /></Tool>
    <Sep />
    <Tool label="Run to cursor"><path d="M0 2h12M0 5.500h12M0 9h8M0 12.500h8" stroke={G} strokeWidth="1.800" /><path d="M9 6l6 4.500L9 16z" fill={G} /></Tool>
    <Tool label="Step into"><path d="M0 0l5 4-5 4z" fill={G} /><path d="M5 5h11M7 9h9M5 13h11" stroke={G} strokeWidth="1.800" /></Tool>
    <Tool label="Step over"><path d="M5 2h11M5 5.500h11M7 9h9" stroke={G} strokeWidth="1.800" /><path d="M0 8l5 4-5 4z" fill={G} /></Tool>
    <Sep />
    <Tool label="Evaluate"><path d="M1 .5h14v15H1zM3.500 3.500h9v3h-9z" stroke={G} strokeWidth="1.500" /><path d="M3 9.500h10M3 12.500h10" stroke={G} strokeWidth="2" strokeDasharray="2 1.500" /></Tool>
    <Sep />
    <Tool label="Breakpoints"><BugShape /><circle cx="13" cy="8.500" r="3" fill="#d5142b" /><circle cx="9" cy="13" r="3" fill="#d5142b" /></Tool>
    <Tool label="Watches"><BugShape /><circle cx="10" cy="10" r="3.500" stroke="#0a94dc" strokeWidth="1.600" fill="#fff" /><path d="M12.500 12.500l3 3" stroke="#0a94dc" strokeWidth="2" /></Tool>
    <Tool label="Locals"><BugShape /><path d="M8 8c3-1 3 8 7 7M15.500 7.500c-3 0-4 8-8 8" stroke="#0a94dc" strokeWidth="1.800" /></Tool>
    <Tool label="Call stack"><BugShape /><path d="M7 8h9M7 11h9M7 14h9" stroke="#0a94dc" strokeWidth="2" /></Tool>
    <LowCaret />
  </div>
);

const MENU: [string, string, string][] = [
  ["", "F", "ile"], ["", "E", "dit"], ["", "V", "iew"], ["Te", "s", "t"], ["", "D", "ebug"], ["", "T", "ools"], ["", "H", "elp"],
];

const CaptionButton = ({ label, children }: { label: string; children: ReactNode }) => (
  <button aria-label={label} className="flex h-4 w-7 items-center justify-center rounded-xs border border-[#8093ae] bg-[#ccd8e6]"><Svg className="size-2.5" box="0 0 10 10">{children}</Svg></button>
);
const HelpGlyph = <><path d="M2.500 3c0-3 5-3 5 0C7.500 5 5 4.500 5 6.500M5 8v1.500" stroke="#3f4a5c" strokeWidth="3" /><path d="M2.500 3c0-3 5-3 5 0C7.500 5 5 4.500 5 6.500M5 8v1.500" stroke="#fff" strokeWidth="1.300" /></>;
const CrossGlyph = <><path d="M1 1l8 8M9 1 1 9" stroke="#3f4a5c" strokeWidth="3.400" /><path d="M1.500 1.500l7 7M8.500 1.500l-7 7" stroke="#fff" strokeWidth="1.500" /></>;

const WATCHES = ["moduleName", "moduleName", "obj_ModuleArr.length", "txt_existingMssg", "urgencySelectedLbl", "urgencySelectedLbl"];

const WatchList = () => (
  <section className="mr-0.5 border border-[#d9d9d9] bg-white p-0.5">
    <div className="flex h-[22px] items-center gap-1 bg-linear-to-b from-[#bccbda] to-[#d5e2ef] pr-[5px] pl-1">
      <Svg><BugShape /><circle cx="10" cy="10" r="3.500" stroke="#0a94dc" strokeWidth="1.600" fill="#c8d7e5" /><path d="M12.500 12.500l3 3" stroke="#0a94dc" strokeWidth="2" /></Svg>
      <h2 className="mr-auto">Watch List</h2>
      <CaptionButton label="Help">{HelpGlyph}</CaptionButton>
      <button aria-label="Pin" className="mx-1 flex w-4 justify-center"><Svg className="size-3.5"><path d="M4.500 1h7M5.500 1v7M10.500 1v7M2 10.500h12l-2-2.500H4z" stroke="#7d8188" strokeWidth="1.400" fill="#dde3ea" /><path d="M8 11v5" stroke="#7d8188" strokeWidth="1.600" /></Svg></button>
      <CaptionButton label="Close">{CrossGlyph}</CaptionButton>
    </div>
    <div className="flex h-[135px] overflow-hidden border border-[#7b8494] bg-white">
      <div className="min-w-0 flex-1">
        <table className="w-full table-fixed border-collapse text-left">
          <thead>
            <tr className="h-5">
              <th className="w-[39.55%] border-r border-[#dedede] pl-0.5 font-normal">Expression</th>
              <th className="w-[42.05%] border-r border-[#dedede] pl-[3px] font-normal">Value</th>
              <th className="pl-[3px] font-normal">Type</th>
            </tr>
          </thead>
          <tbody>
            {WATCHES.map((name, i) => (
              <tr key={i} className="h-[19px]">
                <td className="pl-[3px]">
                  <label className="relative flex items-center">
                    <input type="checkbox" defaultChecked className="size-[13px] appearance-none border border-[#222] bg-white" />
                    <Svg className="pointer-events-none absolute left-0.5 size-[9px]" box="0 0 9 9"><path d="M.5 4.500l2.800 3L8.500 1" stroke="#333" strokeWidth="1.200" /></Svg>
                    <Svg className="mr-[7px] ml-[7px] h-[13px] w-[9px]" box="0 0 9 13"><path d="M4 0l5 6v3l-4 4-5-6V4z" fill="#d79a0a" /><path d="M4 0l5 6-4 4-5-6z" fill="#f3c032" /></Svg>
                    {name}
                  </label>
                </td>
                <td /><td />
              </tr>
            ))}
          </tbody>
        </table>
      </div>
      <div className="mr-px flex w-[15px] flex-col items-center bg-[#f0f0f0] py-1">
        <Svg className="size-2" box="0 0 8 8"><path d="M0 6l4-4 4 4" stroke="#505050" strokeWidth="2" /></Svg>
        <div className="mt-1 h-[61px] w-full bg-[#cdcdcd]" />
        <Svg className="mt-auto size-2" box="0 0 8 8"><path d="M0 2l4 4 4-4" stroke="#505050" strokeWidth="2" /></Svg>
      </div>
    </div>
  </section>
);

const RunPanel = () => (
  <div className="absolute top-6 right-[9px] flex flex-col items-end">
    <div className="flex h-[41px] w-[103px] items-center rounded-sm border border-[#a9a49c] bg-[#f0f0f0] pl-[3px]">
      <TCLogo className="size-8" color="#2a86c8" />
      <span className="mx-1 h-[35px] w-px bg-[#999]" />
      <button aria-label="Pause run" className="ml-1"><Svg><path d="M0 0h7v16H0zM9 0h7v16H9z" fill="#06aefc" /></Svg></button>
      <button aria-label="Stop run" className="relative ml-1 flex size-[26px] items-center justify-center bg-[#c4c4c4]">
        <Svg><path d="M0 0h16v16H0z" fill="#06aefc" /></Svg>
        <CursorIcon className="absolute top-2 left-[7px] h-[19px] w-3" />
      </button>
    </div>
    <div className="relative mt-[3px] w-[69px] border border-[#767676] bg-white px-[3px] py-0.5 text-right">
      <Svg className="absolute -top-[7px] right-1 size-2" box="0 0 8 8"><path d="M0 7.500 7 0v8z" fill="#fff" /><path d="M0 7.500 7 0v8" stroke="#767676" /></Svg>
      <p className="border-b border-black pr-[3px] leading-[15px] whitespace-nowrap">Stopping...</p>
      <p className="pr-[3px] leading-[17px]">Odyssey</p>
    </div>
  </div>
);

const TAB = "border border-[#d6d6d6] bg-[#efefef] px-[3px] whitespace-nowrap";

const RightTaskbar = () => (
  <footer className="flex h-10 bg-[linear-gradient(90deg,#42352a_0%,#42352a_20%,#202022_30%,#222326_50%,#36393c_62%,#3d3e42_100%)] text-white">
    <TaskButton label="Start"><StartIcon /></TaskButton>
    <TaskButton label="Search"><MagnifierIcon /></TaskButton>
    <TaskButton label="Task view"><TaskViewIcon /></TaskButton>
    <TaskButton label="Chrome" open className="ml-0.5 w-[49px]"><ChromeIcon /></TaskButton>
    <TaskButton label="Outlook" open className="w-[49px]"><OutlookIcon letter /></TaskButton>
    <TaskButton label="File Explorer" open className="w-[49px]"><FolderIcon /></TaskButton>
    <TaskButton label="Notepad++" open className="w-[49px]"><NotepadIcon /></TaskButton>
    <TaskButton label="Excel" open className="w-[49px]"><ExcelIcon /></TaskButton>
    <TaskButton label="Database tools" open className="w-[49px]"><ToolIcon /></TaskButton>
    <TaskButton label="Application" open className="w-[49px]"><AppWindowIcon /></TaskButton>
    <TaskButton label="TestComplete" open className="w-[49px]"><TCLogo className="size-6" /></TaskButton>
    <time className={`${NOTO} mr-0.5 ml-auto w-16 self-center text-center text-[11px] leading-[18px]`}>06:01 PM<br />19-04-2023</time>
  </footer>
);

const TestWindow = () => (
  <section className={`${TAHOMA} relative flex min-w-0 flex-col bg-white text-[11px] text-black`}>
    <div className={`${NOTO} flex h-6 items-center gap-1.5 pr-5 pl-0.5 text-[#999]`}>
      <TCLogo className="size-4" />
      <h1 className="mr-auto">TestComplete - C:\AutomationSuite\Regression\3.28\ENAU\Odyssey\Odyssey.pjs</h1>
      <WindowControls className="-mt-1 flex items-center gap-[34px]" />
    </div>
    <nav className="flex h-6 items-center gap-2.5 border-b border-[#9a9a9a] pl-1">
      <Grip />
      <div className="flex items-center gap-[13px]">
        {MENU.map(([a, b, c]) => <button key={b + c}>{a}<u>{b}</u>{c}</button>)}
      </div>
      <LowCaret />
    </nav>
    <Toolbar />
    <div className="flex flex-1 bg-[#efefef]">
      <aside className="flex w-[18px] flex-col bg-white">
        <div className="mt-px h-[95px] border border-l-0 border-[#d6d6d6] bg-[#efefef]" />
        <div className="h-[84px] border border-t-0 border-l-0 border-[#d6d6d6] bg-[#efefef]" />
      </aside>
      <span className="w-1 bg-linear-to-b from-[#efefef] from-20% to-white to-20%" />
      <div className="flex min-w-0 flex-1 flex-col">
        <div className="flex h-[23px] items-end pt-1">
          <button className="h-[19px] border border-b-0 border-[#d6d6d6] bg-white px-[5px] whitespace-nowrap">Project Workspace</button>
          <button className="h-[17px] border border-b-0 border-l-0 border-[#d6d6d6] px-1 whitespace-nowrap">Object Browser</button>
        </div>
        <div className="mr-0.5 flex flex-1 flex-col border border-[#d6d6d6] bg-white p-0.5">
          <div className="flex h-[22px] items-center gap-1 bg-linear-to-b from-[#bccbda] to-[#d5e2ef] pr-[5px] pl-1">
            <Svg><path d="M.7 2.700h13v12H.7z" stroke="#6a6a6a" strokeWidth="1.400" /><path d="M1 2.500h8" stroke="#6a6a6a" strokeWidth="2" /><path d="M14.500.5 8 11l-1 3" stroke="#0aa3ea" strokeWidth="2.600" /></Svg>
            <h2 className="mr-auto">Workspace</h2>
            <CaptionButton label="Help">{HelpGlyph}</CaptionButton>
            <span className="-ml-1" />
            <CaptionButton label="Restore"><path d="M.5 1h9v8h-9z" stroke="#3f4a5c" fill="#fff" /><path d="M3 4h4v2H3z" stroke="#3f4a5c" /></CaptionButton>
            <span className="-ml-1" />
            <CaptionButton label="Close">{CrossGlyph}</CaptionButton>
          </div>
          <div className="min-h-24 flex-1 bg-[#aaa]" />
          <div className="bg-white pt-[3px]"><WatchList /></div>
          <div className="flex h-[21px] items-start bg-[#efefef]">
            <button className={`${TAB} ml-px h-[18px]`}>Call Stack</button>
            <button className={`${TAB} h-[18px] border-l-0`}>Locals</button>
            <button className="h-[19px] border-b border-[#d6d6d6] bg-white px-[5px] whitespace-nowrap">Watch List</button>
            <button className={`${TAB} h-[18px] border-l-0`}>Breakpoints</button>
          </div>
        </div>
      </div>
    </div>
    <div className="flex h-[23px] items-end bg-white pl-[22px]">
      <span className="h-[18px] w-[69px] border border-b-0 border-[#d6d6d6] bg-[#efefef]" />
      <span className="h-[18px] w-[131px] border border-b-0 border-l-0 border-[#d6d6d6] bg-[#efefef]" />
      <span className="h-[18px] w-[43px] border border-b-0 border-l-0 border-[#d6d6d6] bg-[#efefef]" />
    </div>
    <div className="flex h-5 items-center border-t border-[#d6d6d6] bg-[#efefef] text-[#9a9a9a]">
      <span className="h-full w-[54px] border-r border-[#d6d6d6]" />
      <span className="h-full w-[54px] border-r border-[#d6d6d6]" />
      <span className="flex h-full w-[97px] items-center justify-between border-r border-[#d6d6d6] px-[3px]"><span>CAPS</span><span>NUM</span><span>SCRL</span></span>
      <span className="h-full w-[34px] border-r border-[#d6d6d6]" />
    </div>
    <RightTaskbar />
    <RunPanel />
  </section>
);

export default function App() {
  return (
    <main className="grid min-h-screen grid-cols-[1366fr_1920fr] bg-black">
      <BrowserWindow />
      <TestWindow />
    </main>
  );
}
